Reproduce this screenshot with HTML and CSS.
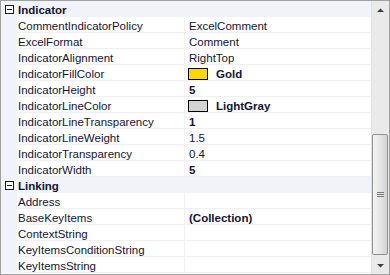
FILE: index.html
```html
<!DOCTYPE html>
<html>
<head>
<meta charset="utf-8">
<link rel="stylesheet" href="styles.css">
</head>
<body>
<div class="grid">
  <div class="rows">
    <div class="cat"><span class="margin"><span class="exp"></span></span><span class="catname">Indicator</span></div>
    <div class="row"><span class="margin"></span><span class="name">CommentIndicatorPolicy</span><span class="val">ExcelComment</span></div>
    <div class="row"><span class="margin"></span><span class="name">ExcelFormat</span><span class="val">Comment</span></div>
    <div class="row"><span class="margin"></span><span class="name">IndicatorAlignment</span><span class="val">RightTop</span></div>
    <div class="row"><span class="margin"></span><span class="name">IndicatorFillColor</span><span class="val b"><span class="sw gold"></span>Gold</span></div>
    <div class="row"><span class="margin"></span><span class="name">IndicatorHeight</span><span class="val b">5</span></div>
    <div class="row"><span class="margin"></span><span class="name">IndicatorLineColor</span><span class="val b"><span class="sw gray"></span>LightGray</span></div>
    <div class="row"><span class="margin"></span><span class="name">IndicatorLineTransparency</span><span class="val b">1</span></div>
    <div class="row"><span class="margin"></span><span class="name">IndicatorLineWeight</span><span class="val">1.5</span></div>
    <div class="row"><span class="margin"></span><span class="name">IndicatorTransparency</span><span class="val">0.4</span></div>
    <div class="row"><span class="margin"></span><span class="name">IndicatorWidth</span><span class="val b">5</span></div>
    <div class="cat"><span class="margin"><span class="exp"></span></span><span class="catname">Linking</span></div>
    <div class="row"><span class="margin"></span><span class="name">Address</span><span class="val"></span></div>
    <div class="row"><span class="margin"></span><span class="name">BaseKeyItems</span><span class="val b">(Collection)</span></div>
    <div class="row"><span class="margin"></span><span class="name">ContextString</span><span class="val"></span></div>
    <div class="row"><span class="margin"></span><span class="name">KeyItemsConditionString</span><span class="val"></span></div>
    <div class="row"><span class="margin"></span><span class="name">KeyItemsString</span><span class="val"></span></div>
  </div>
  <div class="sbar">
    <div class="btn"><svg width="7" height="4" viewBox="0 0 7 4"><path d="M0 4H7L3.5 0.5Z" fill="#404040"/></svg></div>
    <div class="track top"></div>
    <div class="thumb"><svg width="7" height="6" viewBox="0 0 7 6"><path d="M0 .5H7M0 2.5H7M0 4.5H7" stroke="#7a7a7a" stroke-width="1"/></svg></div>
    <div class="track"></div>
    <div class="btn"><svg width="7" height="4" viewBox="0 0 7 4"><path d="M0 0H7L3.5 3.5Z" fill="#404040"/></svg></div>
  </div>
</div>
</body>
</html>
```
FILE: styles.css
```css
html, body {
  margin: 0;
  padding: 0;
  background: #fff;
}
.grid {
  box-sizing: border-box;
  width: 390px;
  height: 275px;
  border: 1px solid #a0a0a0;
  display: flex;
  overflow: hidden;
  font-family: "Liberation Sans", Arial, sans-serif;
  font-size: 11.5px;
  color: #141434;
}
.rows {
  width: 371px;
  display: flex;
  flex-direction: column;
  background: #fff;
}
.row, .cat {
  display: flex;
  height: 16px;
  flex: none;
  line-height: 14px;
}
.margin {
  width: 16px;
  flex: none;
  background: #f0f4fa;
  display: flex;
  align-items: center;
  justify-content: center;
}
.cat {
  background: #f0f4fa;
  font-weight: bold;
}
.catname {
  padding-left: 1px;
  padding-top: 2px;
}
.exp {
  box-sizing: border-box;
  width: 9px;
  height: 9px;
  border: 1px solid #1a1a1a;
  position: relative;
  background: #fff;
  margin-left: 1px;
}
.exp::after {
  content: "";
  position: absolute;
  left: 1px;
  top: 3px;
  width: 5px;
  height: 1px;
  background: #1a1a1a;
}
.name {
  box-sizing: border-box;
  width: 168px;
  flex: none;
  padding-left: 1px;
  padding-top: 2px;
  border-right: 1px solid #f0f0f0;
  border-bottom: 1px solid #f0f0f0;
  white-space: nowrap;
  overflow: hidden;
}
.val {
  box-sizing: border-box;
  flex: 1;
  padding-left: 4px;
  padding-top: 2px;
  border-bottom: 1px solid #f0f0f0;
  display: flex;
  align-items: flex-start;
  white-space: nowrap;
}
.val.b {
  font-weight: bold;
}
.sw {
  box-sizing: border-box;
  width: 20px;
  height: 12px;
  border: 1px solid #000;
  margin-left: -1px;
  margin-right: 8px;
  margin-top: 1px;
  flex: none;
}
.gold { background: #ffd700; }
.gray { background: #d3d3d3; }
.sbar {
  width: 17px;
  flex: none;
  display: flex;
  flex-direction: column;
  background: #eaeaea;
  border-left: 1px solid #e2e2e2;
}
.btn {
  height: 17px;
  flex: none;
  display: flex;
  align-items: center;
  justify-content: center;
}
.track.top {
  height: 116px;
  flex: none;
}
.track {
  flex: 1;
}
.thumb {
  box-sizing: border-box;
  height: 121px;
  flex: none;
  margin: 0 1px 0 0;
  border: 1px solid #8e8f8f;
  border-radius: 2px;
  background: linear-gradient(to right, #f3f3f3 0%, #e6e6e6 50%, #d4d4d4 100%);
  display: flex;
  align-items: center;
  justify-content: center;
}
```
